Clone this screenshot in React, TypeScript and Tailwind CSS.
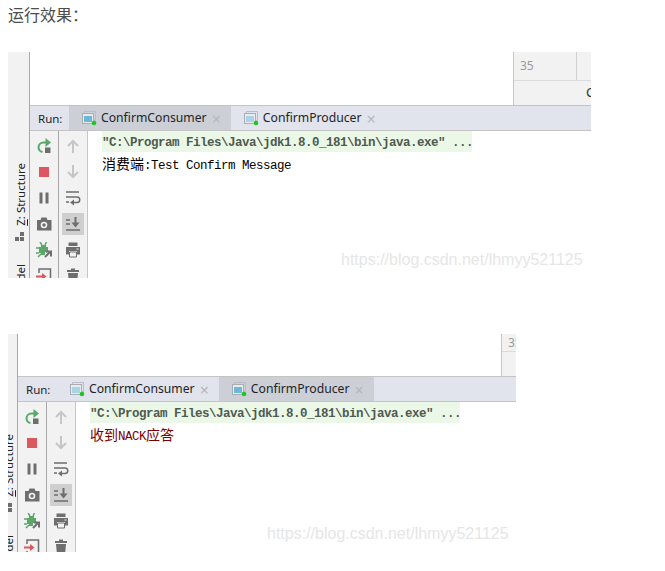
import React from 'react';

const GRAY = '#6e6e6e';
const LIGHT = '#c6c6c6';
const GREEN = '#59a869';
const RED = '#db5860';

const Icon = ({ children }: { children: React.ReactNode }) => (
  <svg width="16" height="16" viewBox="0 0 16 16" fill="none">
    {children}
  </svg>
);

const Rerun = () => (
  <Icon>
    <path d="M12 4.500H7.500A5 5 0 0 0 2.500 9.500a5 5 0 0 0 4 4.500" stroke={GREEN} strokeWidth="2" />
    <path d="M9.500 0l5.500 4.500L9.500 9z" fill={GREEN} />
    <rect x="9" y="9.500" width="5.500" height="5.500" fill={GRAY} />
  </Icon>
);
const Stop = () => (
  <Icon>
    <rect x="3" y="3" width="10" height="10" fill={RED} />
  </Icon>
);
const Pause = () => (
  <Icon>
    <rect x="3.500" y="2.500" width="3" height="11" fill={GRAY} />
    <rect x="9.500" y="2.500" width="3" height="11" fill={GRAY} />
  </Icon>
);
const Camera = () => (
  <Icon>
    <path d="M1 4h3.500l1-2.500h5L11.500 4H15.500v10.500H1z" fill={GRAY} />
    <circle cx="8" cy="9" r="3.300" fill="#f2f2f2" />
    <circle cx="8" cy="9" r="1.700" fill={GRAY} />
  </Icon>
);
const Bug = () => (
  <Icon>
    <path d="M5 3h5v2h2v5H9v3H5v-2H3V5h2z" fill={GREEN} />
    <path d="M4 0l2 3M10.500 0L9 3M0 6h3M0 11h3M2 15l3-3" stroke={GREEN} strokeWidth="1.500" />
    <path d="M9 15l4.500-4.500M10 9.500h5v5" stroke={GRAY} strokeWidth="2" />
  </Icon>
);
const Exit = () => (
  <Icon>
    <path d="M3 5V1h11.500v14H3v-3" stroke={GRAY} strokeWidth="1.500" />
    <path d="M0 8.500h8" stroke={RED} strokeWidth="2" />
    <path d="M6 5l4.500 3.500L6 12z" fill={RED} />
  </Icon>
);
const Up = () => (
  <Icon>
    <path d="M8 15V3M3 8l5-5 5 5" stroke={LIGHT} strokeWidth="2" />
  </Icon>
);
const Down = () => (
  <Icon>
    <path d="M8 1v12M3 8l5 5 5-5" stroke={LIGHT} strokeWidth="2" />
  </Icon>
);
const Wrap = () => (
  <Icon>
    <path d="M1 2h13M1 7h11a2.700 2.700 0 0 1 0 5.500H8M1 12h3" stroke={GRAY} strokeWidth="1.500" />
    <path d="M9 9.500v6L5 12.500z" fill={GRAY} />
  </Icon>
);
const ScrollEnd = () => (
  <Icon>
    <path d="M1 4h4M1 8h4M1 14h14" stroke={GRAY} strokeWidth="1.500" />
    <path d="M10.500 1v7" stroke={GRAY} strokeWidth="2" />
    <path d="M6.500 6.500h8L10.500 11.500z" fill={GRAY} />
  </Icon>
);
const Printer = () => (
  <Icon>
    <path d="M3.500 0.500h9v3.500h-9z" fill={GRAY} />
    <path d="M1 5h14v7.500h-3V9H4v3.500H1z" fill={GRAY} />
    <path d="M4.500 10h7v5h-7z" stroke={GRAY} />
    <rect x="11.500" y="6.500" width="2" height="1" fill="#f2f2f2" />
  </Icon>
);
const Trash = () => (
  <Icon>
    <path d="M6 0.500h4v1.500h4v2H2V2h4z" fill={GRAY} />
    <path d="M3 5h10l-1 11H4z" fill={GRAY} />
  </Icon>
);

const TabIcon = ({ active }: { active: boolean }) => (
  <svg width="15" height="15" viewBox="0 0 15 15" fill="none" className="shrink-0">
    <path d="M2.500 2.500V.5h11v9h-2" stroke="#b9bdc4" />
    <rect x="0.500" y="2.500" width="11" height="10" fill="#e8eaee" stroke="#a9adb4" />
    <rect x="2" y="5" width="8" height="6" fill={active ? '#6cb8d6' : '#a9d3e6'} />
    <circle cx="12" cy="12" r="2.300" fill="#22c322" />
  </svg>
);

const Tab = ({ name, active }: { name: string; active: boolean }) => (
  <div className={`flex items-center pl-[13px] pr-[10px] ${active ? 'bg-[#ccd0d6]' : ''}`}>
    <TabIcon active={active} />
    <span className="ml-[4px] whitespace-nowrap pt-[1px] text-[12.2px] text-[#1f2328]">{name}</span>
    <span className="ml-[5px] pt-[1px] text-[16px] leading-none text-[#b4b7bc]">×</span>
  </div>
);

const leftTools = [Rerun, Stop, Pause, Camera, Bug, Exit];
const rightTools = [Up, Down, Wrap, ScrollEnd, Printer, Trash];

const StripText = ({ top }: { top: number }) => (
  <div className="flex w-[21px] shrink-0 flex-col items-center" style={{ paddingTop: top }}>
    <span className="ml-[3px] whitespace-nowrap text-[11.5px] leading-[13px] text-[#222] [writing-mode:vertical-rl] rotate-180">
      <span className="underline">Z</span>: Structure
    </span>
    <svg width="10" height="10" viewBox="0 0 10 10" className="ml-[2px] mt-[6px] shrink-0">
      <rect x="0" y="5" width="4" height="4" fill={GRAY} />
      <rect x="5" y="5" width="4" height="4" fill={GRAY} />
      <rect x="5" y="0" width="4" height="4" fill={GRAY} />
    </svg>
    <span className="ml-[3px] mt-[22px] whitespace-nowrap text-[11.5px] leading-[13px] text-[#222] [writing-mode:vertical-rl] rotate-180">
      Model
    </span>
  </div>
);

type PanelProps = {
  stripWidth: string;
  stripTop: number;
  width: string;
  height: string;
  topHeight: string;
  sideWidth: string;
  cellHeight: string;
  cellWidth: string;
  activeTab: number;
  children: React.ReactNode;
};

const Panel = (p: PanelProps) => (
  <div className={`flex overflow-hidden ${p.width} ${p.height}`}>
    <div className={`flex shrink-0 justify-end overflow-hidden border-r border-[#a8a8a8] bg-[#f2f2f2] ${p.stripWidth}`}>
      <StripText top={p.stripTop} />
    </div>
    <div className="flex min-w-0 flex-1 flex-col">
      <div className={`flex shrink-0 justify-end ${p.topHeight}`}>
        <div className={`flex flex-col overflow-hidden border-l border-[#c6c6c6] bg-[#f2f2f2] ${p.sideWidth}`}>
          <div className={`flex shrink-0 items-center border-b border-[#dcdcdc] pl-[6px] ${p.cellHeight}`}>
            <div className={`flex h-full items-center border-r border-[#d0d0d0] text-[12px] text-[#9a9a9a] ${p.cellWidth}`}>
              35
            </div>
          </div>
          <div className="flex flex-1 items-center whitespace-nowrap pl-[72px] text-[13px] text-[#333]">C</div>
        </div>
      </div>
      <div className="flex h-[26px] shrink-0 overflow-hidden border-y border-[#c4c4c4] bg-[#e1e4ec]">
        <div className="flex w-[39px] shrink-0 items-center pl-[8px] pt-[1px] text-[11.5px] text-[#1f2328]">Run:</div>
        <div className="flex shrink-0">
          <Tab name="ConfirmConsumer" active={p.activeTab === 0} />
          <Tab name="ConfirmProducer" active={p.activeTab === 1} />
        </div>
      </div>
      <div className="flex min-h-0 flex-1">
        <div className="flex w-[29px] shrink-0 flex-col items-center border-r border-[#a8a8a8] bg-[#f2f2f2] pt-[2px]">
          {leftTools.map((T, i) => (
            <div key={i} className="flex h-[26px] w-full shrink-0 items-center justify-center">
              <T />
            </div>
          ))}
        </div>
        <div className="flex w-[29px] shrink-0 flex-col items-center border-r border-[#c6c6c6] bg-[#f2f2f2] pt-[2px]">
          {rightTools.map((T, i) => (
            <div key={i} className="flex h-[26px] w-full shrink-0 items-center justify-center">
              <div className={`flex h-[22px] w-[22px] items-center justify-center ${i === 3 ? 'bg-[#cfcfcf]' : ''}`}>
                <T />
              </div>
            </div>
          ))}
        </div>
        <div className="flex-1 pl-[14px] font-['Liberation_Mono',monospace] text-[12.5px] tracking-[-0.5px]">
          {p.children}
        </div>
      </div>
    </div>
  </div>
);

const CommandLine = () => (
  <div className="h-[21px] w-[370px] whitespace-pre bg-[#ebf8e8] font-bold leading-[24px] text-[#4f5a4f]">
    "C:\Program Files\Java\jdk1.8.0_181\bin\java.exe" ...
  </div>
);

const Cjk = ({ children }: { children: React.ReactNode }) => (
  <span className="font-['Noto_Sans_CJK_SC',sans-serif] text-[14px] tracking-normal">{children}</span>
);

const Watermark = ({ className }: { className: string }) => (
  <div className={`absolute font-['Liberation_Sans',sans-serif] text-[16px] leading-none text-[#e6e6e6] ${className}`}>
    https://blog.csdn.net/lhmyy521125
  </div>
);

export default function App() {
  return (
    <div className="relative h-[571px] w-[665px] overflow-hidden bg-white pl-2 font-['Noto_Sans',sans-serif]">
      <div className="flex h-[28px] items-center font-['Noto_Sans_CJK_SC',sans-serif] text-[16px] text-[#4d4d4d]">
        运行效果：
      </div>
      <div className="mt-[24px]">
        <Panel
          stripWidth="w-[22px]"
          stripTop={111}
          width="w-[583px]"
          height="h-[226px]"
          topHeight="h-[53px]"
          sideWidth="w-[78px]"
          cellHeight="h-[29px]"
          cellWidth="w-[57px]"
          activeTab={0}
        >
          <CommandLine />
          <div className="h-[20px] whitespace-pre leading-[23px] text-black">
            <Cjk>消费端</Cjk>:Test Confirm Message
          </div>
        </Panel>
      </div>
      <div className="mt-[56px]">
        <Panel
          stripWidth="w-[10px]"
          stripTop={100}
          width="w-[508px]"
          height="h-[218px]"
          topHeight="h-[42px]"
          sideWidth="w-[15px]"
          cellHeight="h-[18px]"
          cellWidth="w-[30px]"
          activeTab={1}
        >
          <CommandLine />
          <div className="h-[20px] whitespace-pre leading-[23px] text-[#7a0000]">
            <Cjk>收到</Cjk>NACK<Cjk>应答</Cjk>
          </div>
        </Panel>
      </div>
      <Watermark className="left-[341px] top-[252px]" />
      <Watermark className="left-[267px] top-[526px]" />
    </div>
  );
}
